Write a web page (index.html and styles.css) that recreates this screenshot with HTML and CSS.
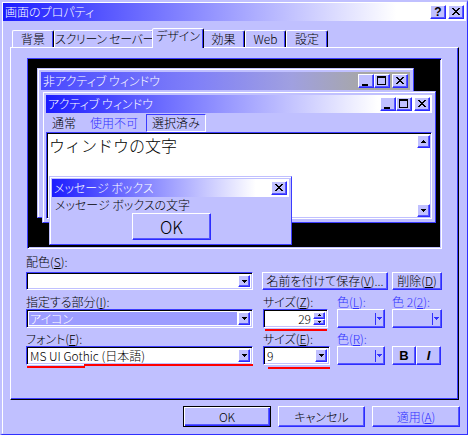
FILE: index.html
```html
<!DOCTYPE html>
<html lang="ja">
<head>
<meta charset="utf-8">
<title>画面のプロパティ</title>
<link rel="stylesheet" href="styles.css">
</head>
<body>
<div class="window">
<div class="frame">
  <div class="titlebar">
    <span class="title-text">画面のプロパティ</span>
    <div class="caps">
      <span class="cap raised cap-help">?</span>
      <span class="cap raised cap-gap"><svg class="glyph" width="14" height="12" viewBox="0 0 14 12"><path d="M3 2h2v1H3zM9 2h2v1H9zM4 3h2v1H4zM8 3h2v1H8zM5 4h4v1H5zM6 5h2v1H6zM5 6h4v1H5zM4 7h2v1H4zM8 7h2v1H8zM3 8h2v1H3zM9 8h2v1H9z"/></svg></span>
    </div>
  </div>

  <div class="tabs">
    <div class="tab tab-bg">背景</div>
    <div class="tab tab-ss">スクリーン セーバー</div>
    <div class="tab tab-design tab-active">デザイン</div>
    <div class="tab tab-fx">効果</div>
    <div class="tab tab-web">Web</div>
    <div class="tab tab-set">設定</div>
  </div>

  <div class="panel">
    <div class="preview">
      <div class="pwin pwin-inactive">
        <div class="ptitle ptitle-inactive">
          <span class="ptitle-text">非アクティブ ウィンドウ</span>
          <div class="caps">
            <span class="cap raised"><svg class="glyph" width="14" height="12" viewBox="0 0 14 12"><path d="M3 9h6v2H3z"/></svg></span>
            <span class="cap raised"><svg class="glyph" width="14" height="12" viewBox="0 0 14 12"><path d="M2 1h9v2H2zM2 3h1v7H2zM10 3h1v7h-1zM2 9h9v1H2z"/></svg></span>
            <span class="cap raised cap-gap"><svg class="glyph" width="14" height="12" viewBox="0 0 14 12"><path d="M3 2h2v1H3zM9 2h2v1H9zM4 3h2v1H4zM8 3h2v1H8zM5 4h4v1H5zM6 5h2v1H6zM5 6h4v1H5zM4 7h2v1H4zM8 7h2v1H8zM3 8h2v1H3zM9 8h2v1H9z"/></svg></span>
          </div>
        </div>
      </div>

      <div class="pwin pwin-active">
        <div class="ptitle ptitle-active">
          <span class="ptitle-text">アクティブ ウィンドウ</span>
          <div class="caps">
            <span class="cap raised"><svg class="glyph" width="14" height="12" viewBox="0 0 14 12"><path d="M3 9h6v2H3z"/></svg></span>
            <span class="cap raised"><svg class="glyph" width="14" height="12" viewBox="0 0 14 12"><path d="M2 1h9v2H2zM2 3h1v7H2zM10 3h1v7h-1zM2 9h9v1H2z"/></svg></span>
            <span class="cap raised cap-gap"><svg class="glyph" width="14" height="12" viewBox="0 0 14 12"><path d="M3 2h2v1H3zM9 2h2v1H9zM4 3h2v1H4zM8 3h2v1H8zM5 4h4v1H5zM6 5h2v1H6zM5 6h4v1H5zM4 7h2v1H4zM8 7h2v1H8zM3 8h2v1H3zM9 8h2v1H9z"/></svg></span>
          </div>
        </div>
        <div class="menu">
          <span class="mi">通常</span>
          <span class="mi mi-dis">使用不可</span>
          <span class="mi-sel">選択済み</span>
        </div>
        <div class="ptextarea">
          <div class="bigtext">ウィンドウの文字</div>
          <div class="vscroll">
            <span class="sbtn raised"><svg class="glyph" width="5" height="3" viewBox="0 0 5 3"><path d="M2 0h1v1H2zM1 1h3v1H1zM0 2h5v1H0z"/></svg></span>
            <span class="sbtn raised"><svg class="glyph" width="5" height="3" viewBox="0 0 5 3"><path d="M0 0h5v1H0zM1 1h3v1H1zM2 2h1v1H2z"/></svg></span>
          </div>
        </div>
      </div>

      <div class="pwin pwin-msg">
        <div class="ptitle ptitle-active">
          <span class="ptitle-text">メッセージ ボックス</span>
          <div class="caps">
            <span class="cap raised"><svg class="glyph" width="14" height="12" viewBox="0 0 14 12"><path d="M3 2h2v1H3zM9 2h2v1H9zM4 3h2v1H4zM8 3h2v1H8zM5 4h4v1H5zM6 5h2v1H6zM5 6h4v1H5zM4 7h2v1H4zM8 7h2v1H8zM3 8h2v1H3zM9 8h2v1H9z"/></svg></span>
          </div>
        </div>
        <div class="msgtext">メッセージ ボックスの文字</div>
        <div class="msgok raised">OK</div>
      </div>
    </div>

    <div class="controls">
      <div class="lbl lbl-first r1 c1">配色(<u>S</u>):</div>
      <div class="combo sunken r2 c1 w-wide">
        <span class="ctext"></span>
        <span class="drop raised"><svg class="glyph" width="5" height="3" viewBox="0 0 5 3"><path d="M0 0h5v1H0zM1 1h3v1H1zM2 2h1v1H2z"/></svg></span>
      </div>
      <div class="pushbtn raised r2 c23 w-save">名前を付けて保存(<u>V</u>)...</div>
      <div class="pushbtn raised r2 c4 w-del">削除(<u>D</u>)</div>

      <div class="lbl r3 c1">指定する部分(<u>I</u>):</div>
      <div class="lbl r3 c2">サイズ(<u>Z</u>):</div>
      <div class="lbl dis r3 c3">色(<u>L</u>):</div>
      <div class="lbl dis r3 c4">色 2(<u>2</u>):</div>

      <div class="combo sunken r4 c1 w-wide">
        <span class="ctext ctext-sel">アイコン</span>
        <span class="drop raised"><svg class="glyph" width="5" height="3" viewBox="0 0 5 3"><path d="M0 0h5v1H0zM1 1h3v1H1zM2 2h1v1H2z"/></svg></span>
      </div>
      <div class="combo sunken spin r4 c2">
        <span class="ctext ctext-num">29</span>
        <span class="spinbtns">
          <span class="spinbtn raised"><svg class="glyph" width="3" height="2" viewBox="0 0 3 2"><path d="M1 0h1v1H1zM0 1h3v1H0z"/></svg></span>
          <span class="spinbtn raised"><svg class="glyph" width="3" height="2" viewBox="0 0 3 2"><path d="M0 0h3v1H0zM1 1h1v1H1z"/></svg></span>
        </span>
        <span class="mark mark-spin"></span>
      </div>
      <div class="ccombo raised r4 c3 w-col"><span class="csep"></span><svg class="glyph glyph-blue" width="5" height="3" viewBox="0 0 5 3"><path d="M0 0h5v1H0zM1 1h3v1H1zM2 2h1v1H2z"/></svg></div>
      <div class="ccombo raised r4 c4 w-col2"><span class="csep"></span><svg class="glyph glyph-blue" width="5" height="3" viewBox="0 0 5 3"><path d="M0 0h5v1H0zM1 1h3v1H1zM2 2h1v1H2z"/></svg></div>

      <div class="lbl r5 c1">フォント(<u>F</u>):</div>
      <div class="lbl r5 c2">サイズ(<u>E</u>):</div>
      <div class="lbl dis r5 c3">色(<u>R</u>):</div>

      <div class="combo sunken r6 c1 w-wide">
        <span class="ctext">MS UI Gothic (日本語)</span>
        <span class="drop raised"><svg class="glyph" width="5" height="3" viewBox="0 0 5 3"><path d="M0 0h5v1H0zM1 1h3v1H1zM2 2h1v1H2z"/></svg></span>
        <span class="mark mark-font1"></span>
        <span class="mark mark-font2"></span>
      </div>
      <div class="combo sunken r6 c2 w-size">
        <span class="ctext">9</span>
        <span class="drop raised"><svg class="glyph" width="5" height="3" viewBox="0 0 5 3"><path d="M0 0h5v1H0zM1 1h3v1H1zM2 2h1v1H2z"/></svg></span>
        <span class="mark mark-size"></span>
      </div>
      <div class="ccombo raised r6 c3 w-col"><span class="csep"></span><svg class="glyph glyph-blue" width="5" height="3" viewBox="0 0 5 3"><path d="M0 0h5v1H0zM1 1h3v1H1zM2 2h1v1H2z"/></svg></div>
      <div class="fmt r6 c4">
        <span class="fmtbtn raised fmt-b">B</span>
        <span class="fmtbtn raised fmt-i">I</span>
      </div>
    </div>
  </div>

  <div class="footer">
    <div class="pushbtn fbtn fbtn-default">OK</div>
    <div class="pushbtn raised fbtn">キャンセル</div>
    <div class="pushbtn raised fbtn fbtn-apply dis">適用(<u>A</u>)</div>
  </div>
</div>
</div>
</body>
</html>
```

FILE: styles.css
```css
* { box-sizing: border-box; }
html, body { margin: 0; padding: 0; }
body {
  width: 468px;
  height: 435px;
  overflow: hidden;
  background: #c0c0ff;
  color: #000;
  font-family: "Noto Sans CJK JP", "Noto Sans", sans-serif;
  font-size: 12px;
  font-weight: 300;
  line-height: 14px;
  font-feature-settings: "palt";
}
u { text-decoration: underline; text-underline-offset: 1px; }

/* 3D primitives */
.raised {
  background: #c0c0ff;
  border: 1px solid;
  border-color: #fff #2c2cff #2c2cff #fff;
  box-shadow: inset -1px -1px #5858ff;
}
.sunken {
  border: 1px solid;
  border-color: #3c3cff #fff #fff #3c3cff;
  box-shadow: inset 1px 1px #000, inset -1px -1px #c0c0ff;
}
.glyph { display: block; fill: #000; shape-rendering: crispEdges; }
.glyph-blue { fill: #3030ff; }
.dis { color: #3030ff; }

/* window frame */
.window {
  width: 468px;
  height: 435px;
  border-style: solid;
  border-width: 2px 1px 1px 2px;
  border-color: #c0c0ff #3030ff #3030ff #c0c0ff;
}
.frame {
  height: 100%;
  border: 1px solid;
  border-color: #fff #c0c0ff #c0c0ff #fff;
}
.titlebar {
  height: 18px;
  display: flex;
  align-items: center;
  padding: 0 2px;
  color: #fff;
  background: linear-gradient(to right, #1c1cff 0%, #ffffff 85%);
}
.title-text { flex: 1; white-space: nowrap; }
.caps { display: flex; }
.cap {
  width: 16px;
  height: 14px;
  display: flex;
  align-items: center;
  justify-content: center;
}
.cap-gap { margin-left: 2px; }
.cap-help {
  font-family: "Liberation Sans", sans-serif;
  font-weight: bold;
  font-size: 12px;
  line-height: 12px;
  color: #000;
}

/* tabs */
.tabs {
  display: flex;
  align-items: flex-end;
  height: 19px;
  margin-top: 7px;
  padding-left: 9px;
}
.tab {
  height: 17px;
  border: 1px solid;
  border-bottom: 0;
  border-color: #fff #000 transparent #fff;
  border-radius: 2px 2px 0 0;
  box-shadow: inset -1px 0 #3c3cff;
  text-align: center;
  line-height: 15px;
  white-space: nowrap;
}
.tab-active {
  height: 20px;
  margin: 0 -2px -1px;
  position: relative;
  z-index: 1;
  background: #c0c0ff;
  line-height: 14px;
}
.tab-bg { width: 42px; }
.tab-ss { width: 100px; letter-spacing: -0.3px; }
.tab-design { width: 52px; }
.tab-fx { width: 43px; }
.tab-web { width: 41px; }
.tab-set { width: 42px; }

/* panel */
.panel {
  margin-left: 7px;
  width: 449px;
  height: 353px;
  border: 1px solid;
  border-color: #fff #000 #000 #fff;
  box-shadow: inset -1px -1px #3c3cff;
  padding: 10px 0 0 15px;
}

/* preview canvas */
.preview {
  position: relative;
  width: 415px;
  height: 191px;
  margin-left: 1px;
  background: #000;
  border: 1px solid;
  border-color: #3c3cff #fff #fff #3c3cff;
  box-shadow: inset 1px 1px #000, inset -1px -1px #c0c0ff;
  overflow: hidden;
}
.pwin {
  position: absolute;
  display: flex;
  flex-direction: column;
  background: #c0c0ff;
  border: 1px solid;
  border-color: #c0c0ff #3c3cff #3c3cff #c0c0ff;
  box-shadow: inset 1px 1px #fff;
  padding: 3px;
}
.pwin-inactive { left: 9px; top: 9px; width: 377px; height: 150px; }
.pwin-active { left: 14px; top: 32px; width: 394px; height: 132px; }
.pwin-msg { left: 21px; top: 117px; width: 243px; height: 69px; padding: 2px; }

.ptitle {
  flex: none;
  height: 18px;
  display: flex;
  align-items: center;
  padding: 0 2px;
  color: #fff;
}
.ptitle-text { flex: 1; white-space: nowrap; }
.ptitle-active { background: linear-gradient(to right, #1c1cff 0%, #ffffff 86%); }
.ptitle-inactive {
  background: linear-gradient(to right, #4848ff 0%, #8080f8 42%, #a0a0e0 68%, #a8a8a0 90%, #a8a8a0 100%);
}

.menu {
  flex: none;
  height: 19px;
  display: flex;
  align-items: center;
  padding-left: 6px;
}
.mi { margin-right: 14px; }
.mi-dis { color: #3030ff; margin-right: 8px; }
.mi-sel {
  height: 18px;
  line-height: 16px;
  padding: 0 5px;
  border: 1px solid;
  border-color: #3c3cff #fff #fff #3c3cff;
}

.ptextarea {
  flex: 1;
  display: flex;
  background: #fff;
  border: 1px solid;
  border-color: #3c3cff #fff #fff #3c3cff;
  box-shadow: inset 1px 1px #000, inset -1px -1px #c0c0ff;
  padding: 2px 1px 1px 1px;
}
.bigtext {
  flex: 1;
  font-size: 16px;
  line-height: 20px;
  padding-left: 1px;
  font-feature-settings: normal;
}
.vscroll {
  width: 13px;
  display: flex;
  flex-direction: column;
  justify-content: space-between;
}
.sbtn {
  width: 13px;
  height: 13px;
  display: flex;
  align-items: center;
  justify-content: center;
}

.msgtext {
  height: 16px;
  line-height: 16px;
  padding-left: 3px;
  white-space: nowrap;
}
.msgok {
  align-self: center;
  width: 79px;
  height: 27px;
  display: flex;
  align-items: center;
  justify-content: center;
  font-size: 17px;
  margin-left: 2px;
}

/* controls grid */
.controls {
  display: grid;
  grid-template-columns: 237px 74px 55px 50px;
  grid-template-rows: 23px 18px 19px 19px 18px 19px;
}
.r1 { grid-row: 1; } .r2 { grid-row: 2; } .r3 { grid-row: 3; }
.r4 { grid-row: 4; } .r5 { grid-row: 5; } .r6 { grid-row: 6; }
.c1 { grid-column: 1; } .c2 { grid-column: 2; } .c3 { grid-column: 3; }
.c4 { grid-column: 4; } .c23 { grid-column: 2 / 4; }

.lbl {
  align-self: end;
  line-height: 15px;
  white-space: nowrap;
}
.lbl-first { padding-bottom: 3px; }

.combo {
  position: relative;
  display: flex;
  padding: 2px;
  background: #fff;
}
.w-wide { width: 227px; }
.spin { width: 65px; }
.w-size { width: 67px; }
.ctext {
  flex: 1;
  padding-left: 1px;
  line-height: 14px;
  white-space: nowrap;
}
.ctext-sel { background: #9c9cff; color: #fff; margin-right: 1px; }
.ctext-num { text-align: right; padding-right: 2px; }
.drop {
  width: 12px;
  display: flex;
  align-items: center;
  justify-content: center;
}
.spinbtns { width: 12px; display: flex; flex-direction: column; }
.spinbtn {
  flex: 1;
  display: flex;
  align-items: center;
  justify-content: center;
}

.ccombo {
  display: flex;
  align-items: center;
  justify-content: flex-end;
  gap: 1px;
  padding-right: 2px;
  height: 19px;
}
.w-col { width: 48px; }
.w-col2 { width: 50px; }
.csep { width: 1px; height: 12px; background: #3030ff; }

.fmt { display: flex; }
.fmtbtn {
  height: 19px;
  display: flex;
  align-items: center;
  justify-content: center;
  font-family: "Liberation Sans", sans-serif;
  font-weight: bold;
  font-size: 13px;
}
.fmt-b { width: 24px; }
.fmt-i { width: 25px; font-style: italic; }

.pushbtn {
  display: flex;
  align-items: center;
  justify-content: center;
  white-space: nowrap;
}
.w-save { width: 126px; margin-left: -1px; }
.w-del { width: 50px; }

/* red annotation marks laid over the fields */
.mark { position: absolute; height: 2px; background: #f00; }
.mark-spin { left: 1px; top: 19px; width: 62px; }
.mark-font1 { left: 0; top: 19px; width: 58px; }
.mark-font2 { left: 57px; top: 17px; width: 169px; }
.mark-size { left: 4px; top: 20px; width: 62px; }

/* footer */
.footer {
  display: flex;
  justify-content: flex-end;
  gap: 7px;
  margin-top: 6px;
  padding-right: 6px;
}
.fbtn { width: 87px; height: 21px; }
.fbtn-default {
  width: 88px;
  background: #c0c0ff;
  border: 1px solid #000;
  box-shadow: inset 1px 1px #fff, inset -1px -1px #2c2cff, inset -2px -2px #5858ff;
}
.fbtn-apply { width: 88px; }
```
